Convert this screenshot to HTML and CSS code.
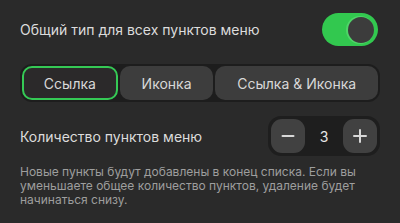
FILE: index.html
```html
<!DOCTYPE html>
<html lang="ru">
<head>
<meta charset="utf-8">
<link rel="stylesheet" href="styles.css">
</head>
<body>
<div class="panel">
  <div class="row row-toggle">
    <span class="label">Общий тип для всех пунктов меню</span>
    <div class="toggle"><div class="knob"></div></div>
  </div>
  <div class="segmented">
    <button class="seg seg-active">Ссылка</button>
    <button class="seg">Иконка</button>
    <button class="seg">Ссылка &amp; Иконка</button>
  </div>
  <div class="row row-stepper">
    <span class="label">Количество пунктов меню</span>
    <div class="stepper">
      <button class="step-btn" aria-label="minus">
        <svg width="14" height="14" viewBox="0 0 14 14"><path d="M1.5 7h11" stroke="#d8d8d8" stroke-width="2" stroke-linecap="round"/></svg>
      </button>
      <span class="step-value">3</span>
      <button class="step-btn" aria-label="plus">
        <svg width="16" height="16" viewBox="0 0 16 16"><path d="M2 8h12M8 2v12" stroke="#d8d8d8" stroke-width="2" stroke-linecap="round"/></svg>
      </button>
    </div>
  </div>
  <p class="hint">Новые пункты будут добавлены в конец списка. Если вы уменьшаете общее количество пунктов, удаление будет начинаться снизу.</p>
</div>
</body>
</html>
```
FILE: styles.css
```css
html, body {
  margin: 0;
  padding: 0;
  background: #2a2a2a;
  height: 100%;
}
body {
  font-family: Inter, "Noto Sans", sans-serif;
  color: #dcdcdc;
}
.panel {
  padding: 13px 20px 0 20px;
}
.row {
  display: flex;
  align-items: center;
  justify-content: space-between;
}
.label {
  font-size: 14px;
  color: #dcdcdc;
}
.toggle {
  width: 56px;
  height: 33px;
  border-radius: 17px;
  background: #32c84f;
  display: flex;
  align-items: center;
  justify-content: flex-end;
  padding-right: 4px;
  box-sizing: border-box;
  margin-right: 2px;
}
.knob {
  width: 26px;
  height: 26px;
  border-radius: 50%;
  background: #3c3c3c;
  box-shadow: -1px 0 0 1px #4fd468;
}
.segmented {
  margin-top: 18px;
  display: flex;
  gap: 2px;
  padding: 2px;
  background: #1d1d1d;
  border-radius: 12px;
}
.seg {
  flex: 1 1 auto;
  height: 34px;
  padding: 0;
  border: 2px solid transparent;
  border-radius: 10px;
  background: #3d3d3d;
  color: #d8d8d8;
  font-family: inherit;
  font-size: 14px;
}
.seg-active {
  background: #2b292a;
  border-color: #35c955;
}
.row-stepper {
  margin-top: 14px;
}
.stepper {
  display: flex;
  align-items: center;
  padding: 3px;
  background: #1e1e1e;
  border-radius: 13px;
}
.step-btn {
  width: 34px;
  height: 34px;
  padding: 0;
  border: none;
  border-radius: 11px;
  background: #414141;
  display: flex;
  align-items: center;
  justify-content: center;
}
.step-value {
  width: 38px;
  text-align: center;
  font-size: 14px;
  color: #e6e6e6;
}
.hint {
  margin: 9px 0 0 0;
  font-size: 12px;
  line-height: 14px;
  color: #9e9e9e;
}
```
